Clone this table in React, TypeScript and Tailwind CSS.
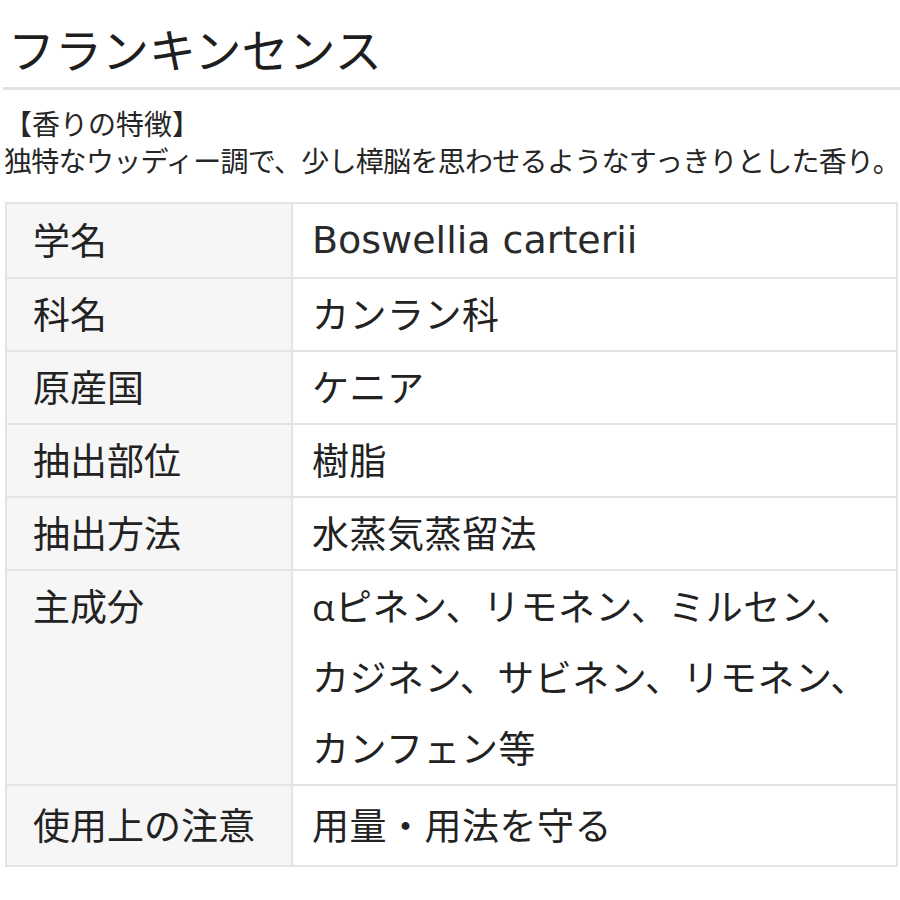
const rows: { label: string; value: string[]; latin?: boolean }[] = [
  { label: "学名", value: ["Boswellia carterii"], latin: true },
  { label: "科名", value: ["カンラン科"] },
  { label: "原産国", value: ["ケニア"] },
  { label: "抽出部位", value: ["樹脂"] },
  { label: "抽出方法", value: ["水蒸気蒸留法"] },
  {
    label: "主成分",
    value: ["αピネン、リモネン、ミルセン、", "カジネン、サビネン、リモネン、", "カンフェン等"],
  },
  { label: "使用上の注意", value: ["用量・用法を守る"] },
];

export default function App() {
  return (
    <div
      className="w-[900px] h-[900px] bg-white text-[#222] overflow-hidden"
      style={{ fontFamily: "'Open Sans', 'Noto Sans CJK JP', sans-serif" }}
    >
      {/* Title */}
      <h1 className="pl-[8px] pt-[20px] text-[47px] leading-[60px] font-normal text-[#1e1e1e]">
        フランキンセンス
      </h1>
      <div className="ml-[3px] mt-[7px] h-[3px] bg-[#e2e2e2]" />

      {/* Description */}
      <div className="pl-[4px] pt-[16px] text-[28px] leading-[37px] text-[#262626]">
        <p>【香りの特徴】</p>
        <p className="whitespace-nowrap tracking-[-0.7px]">
          独特なウッディー調で、少し樟脳を思わせるようなすっきりとした香り。
        </p>
      </div>

      {/* Table */}
      <div className="mt-[22px] ml-[5px] w-[893px] border-2 border-[#e4e4e4]">
        {rows.map((row, i) => (
          <div
            key={row.label}
            className={`flex ${i > 0 ? "border-t-2 border-[#e4e4e4]" : ""}`}
          >
            <div
              className={`w-[286px] shrink-0 bg-[#f6f6f6] border-r-2 border-[#e4e4e4] pl-[26px] text-[37px] leading-[71px] text-[#222] ${i === 0 ? "py-[1px]" : ""} ${i === rows.length - 1 ? "py-[4px]" : ""}`}
            >
              {row.label}
            </div>
            <div
              className={`flex-1 pl-[19px] text-[37px] leading-[71px] text-[#222] ${i === 0 ? "py-[1px]" : ""} ${i === rows.length - 1 ? "py-[4px]" : ""}`}
            >
              {row.value.map((line) => (
                <div
                  key={line}
                  className={`whitespace-nowrap ${row.latin ? "font-['DejaVu_Sans'] text-[38px] text-[#2a2a2a]" : "tracking-[0.5px]"}`}
                >
                  {line}
                </div>
              ))}
            </div>
          </div>
        ))}
      </div>
    </div>
  );
}
